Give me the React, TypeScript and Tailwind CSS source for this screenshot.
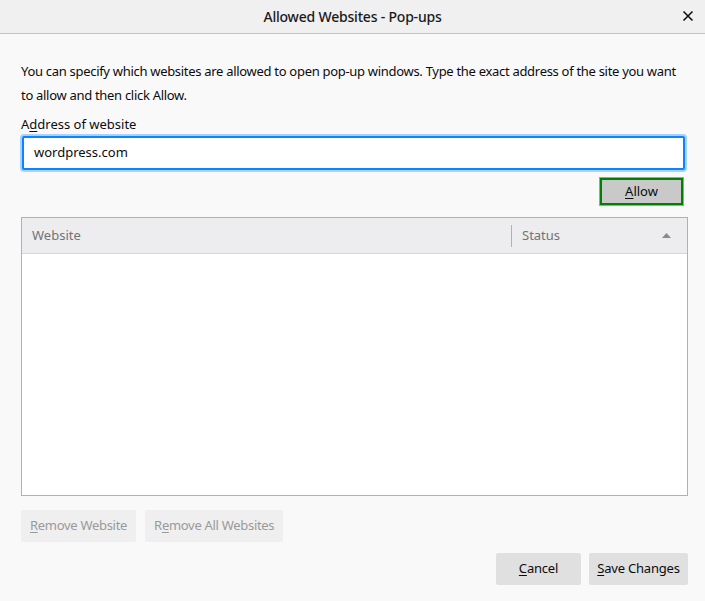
import React from 'react';

const Key: React.FC<{ children: React.ReactNode }> = ({ children }) => <span className="underline underline-offset-2">{children}</span>;

export default function App() {
  return (
    <div className="w-[705px] h-[601px] bg-[#f9f9f9] flex flex-col text-[13px] text-[#0c0c0d] font-['Noto_Sans',sans-serif]">
      {/* Title bar */}
      <div className="h-[34px] bg-[#f0f0f0] border-b border-[#c4c4c4] flex items-center relative">
        <div className="flex-1 text-center text-[14px] font-medium text-[#1a1a1a] tracking-[-0.2px]">Allowed Websites - Pop-ups</div>
        <svg className="absolute right-[11px] top-[10px]" width="12" height="12" viewBox="0 0 12 12">
          <path d="M1.5 1.5 L10.5 10.5 M10.5 1.5 L1.5 10.5" stroke="#111" strokeWidth="1.6" />
        </svg>
      </div>

      <div className="flex-1 flex flex-col pl-[21px] pr-[17px] pt-[25px]">
        <p className="leading-[24px] tracking-[-0.3px]">
          You can specify which websites are allowed to open pop-up windows. Type the exact address of the site you want to allow and then click Allow.
        </p>
        <div className="mt-[8px] leading-[18px]">A<Key>d</Key>dress of website</div>
        <div className="mt-[3px] ml-[1px] mr-[3px] h-[34px] bg-white border-2 border-[#0a84ff] rounded-[2px] shadow-[0_0_0_2px_#a8d2ff] flex items-center px-[10px]">
          wordpress.com
        </div>
        <div className="flex justify-end mt-[7px] pr-[4px]">
          <button className="w-[85px] h-[29px] bg-[#c9c9c9] border border-[#a0a0a0] p-0">
            <span className="flex w-full h-full items-center justify-center border-2 border-[#008000]"><Key>A</Key>llow</span>
          </button>
        </div>

        {/* Table */}
        <div className="mt-[11px] h-[279px] border border-[#b1b1b1] bg-white flex flex-col">
          <div className="h-[36px] bg-[#ededf0] border-b border-[#d7d7db] flex items-center text-[#737373]">
            <div className="flex-1 pl-[10px]">Website</div>
            <div className="w-px h-[22px] bg-[#b1b1b1]" />
            <div className="w-[175px] pl-[10px] pr-[16px] flex items-center justify-between">
              <span>Status</span>
              <svg width="9" height="5" viewBox="0 0 9 5"><path d="M0 5 L4.5 0 L9 5 Z" fill="#8a8a8a" /></svg>
            </div>
          </div>
          <div className="flex-1" />
        </div>

        <div className="flex gap-[9px] mt-[14px] tracking-[-0.3px]">
          <div className="h-[32px] px-[9px] bg-[#efefef] rounded-[2px] flex items-center text-[#9a9a9a]"><Key>R</Key>emove Website</div>
          <div className="h-[32px] px-[9px] bg-[#efefef] rounded-[2px] flex items-center text-[#9a9a9a]">R<Key>e</Key>move All Websites</div>
        </div>

        <div className="flex justify-end gap-[8px] mt-[11px] tracking-[-0.2px]">
          <div className="w-[85px] h-[32px] bg-[#e0e0e1] rounded-[2px] flex items-center justify-center"><Key>C</Key>ancel</div>
          <div className="w-[99px] h-[32px] bg-[#e0e0e1] rounded-[2px] flex items-center justify-center"><Key>S</Key>ave Changes</div>
        </div>
      </div>
    </div>
  );
}
